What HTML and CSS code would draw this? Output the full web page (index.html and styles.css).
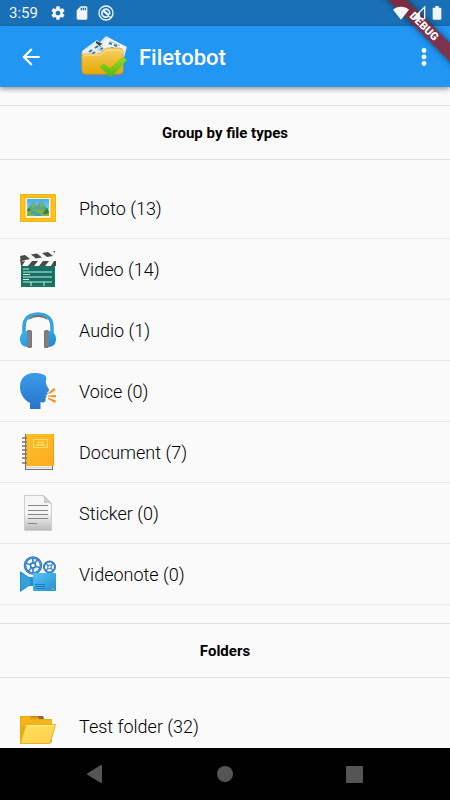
FILE: index.html
```html
<!DOCTYPE html>
<html lang="en">
<head>
    <meta charset="UTF-8">
    <meta name="viewport" content="width=device-width, initial-scale=1.0">
    <title>Filetobot</title>
    <link rel="stylesheet" href="styles.css">
</head>
<body>

    <div class="status-bar">
        <span class="clock">3:59</span>
        <svg class="status-icon" viewBox="0 0 24 24" fill="currentColor"><path d="M19.43 12.98c.04-.32.07-.64.07-.98s-.03-.66-.07-.98l2.11-1.65c.19-.15.24-.42.12-.64l-2-3.46c-.12-.22-.39-.3-.61-.22l-2.49 1c-.52-.4-1.08-.73-1.69-.98l-.38-2.65C14.46 2.18 14.25 2 14 2h-4c-.25 0-.46.18-.49.42l-.38 2.65c-.61.25-1.17.59-1.69.98l-2.49-1c-.23-.09-.49 0-.61.22l-2 3.46c-.13.22-.07.49.12.64l2.11 1.65c-.04.32-.07.65-.07.98s.03.66.07.98l-2.11 1.65c-.19.15-.24.42-.12.64l2 3.46c.12.22.39.3.61.22l2.49-1c.52.4 1.08.73 1.69.98l.38 2.65c.03.24.24.42.49.42h4c.25 0 .46-.18.49-.42l.38-2.65c.61-.25 1.17-.59 1.69-.98l2.49 1c.23.09.49 0 .61-.22l2-3.46c.12-.22.07-.49-.12-.64l-2.11-1.65zM12 15.5c-1.93 0-3.5-1.57-3.5-3.5s1.57-3.5 3.5-3.5 3.5 1.57 3.5 3.5-1.57 3.5-3.5 3.5z"/></svg>
        <svg class="status-icon" viewBox="0 0 24 24" fill="currentColor"><path d="M18 2h-8L4 8v12c0 1.100.9 2 2 2h12c1.100 0 2-.9 2-2V4c0-1.100-.9-2-2-2zm-6 6h-2V4h2v4zm3 0h-2V4h2v4zm3 0h-2V4h2v4z"/></svg>
        <svg class="status-icon" viewBox="0 0 24 24" fill="none" stroke="currentColor"><circle cx="12" cy="12" r="10.500" stroke-width="2"/><path d="M16 16.500A6 6 0 1 1 17.500 14" stroke-width="2.500"/><path d="M8 8.500l8.500 7" stroke-width="3.500"/><path d="M17 17l2.500 2.500" stroke-width="2"/></svg>
        <div class="status-right">
            <svg class="status-icon" viewBox="0 0 24 24" fill="currentColor"><path d="M12 22L0 7C3 4 7.300 2.500 12 2.500S21 4 24 7z"/></svg>
            <svg class="status-icon" viewBox="0 0 24 24"><path d="M3 20.500L20.500 3v17.500z" fill="none" stroke="currentColor" stroke-width="2"/><path d="M2 21.500L13.500 10v11.500z" fill="currentColor"/></svg>
            <svg class="status-icon" viewBox="0 0 24 24" fill="currentColor"><path d="M7 4h2.500V1.500h5V4H17q1.500 0 1.500 1.500v15q0 1.500-1.500 1.500H7q-1.500 0-1.500-1.500v-15Q5.500 4 7 4z"/></svg>
        </div>
    </div>

    <header class="app-bar">
        <button class="icon-button" type="button" aria-label="Back">
            <svg width="26" height="26" viewBox="0 0 24 24" fill="currentColor"><path d="M20 11H7.830l5.590-5.590L12 4l-8 8 8 8 1.410-1.410L7.830 13H20v-2z"/></svg>
        </button>
        <svg class="logo" width="48" height="42" viewBox="0 0 48 42">
            <defs>
                <linearGradient id="logoFolder" x1="0" y1="0" x2="0" y2="1"><stop offset="0" stop-color="#f6cf68"/><stop offset="1" stop-color="#e5a900"/></linearGradient>
                <linearGradient id="logoCheck" x1="0" y1="0" x2="0" y2="1"><stop offset="0" stop-color="#91df25"/><stop offset="1" stop-color="#52b512"/></linearGradient>
            </defs>
            <ellipse cx="23" cy="39" rx="22" ry="2" fill="#5d87a5" opacity=".7"/>
            <path d="M1 17h6v20H2z" fill="#e78a13"/>
            <path d="M2 15L17 4l12 11-4 19H4z" fill="#e6edf1"/>
            <path d="M17 9l9-9 21 11-6 21H17z" fill="#dbe5ea"/>
            <path d="M21 8l7-6 18 9-7 16H22z" fill="#f1f4f6"/>
            <path d="M16 5l7 3-3 1 2 3-6-5z" fill="#34434b"/>
            <path d="M9 16l3-2M15 12l3-2M12 18l3-2M20 14l3-2M29 7l3 1M34 9l3 1M31 12l3 1M37 14l3 1" stroke="#287ca3" stroke-width="2"/>
            <path d="M18 13l8 2M30 5l10 5" stroke="#aab9c0" stroke-width="1"/>
            <path d="M2 21q0-3 3-3h13q2 0 4-2l3-3q1-1 3-1h11q4 0 4 4v18q0 4-4 4H6q-4 0-4-4z" fill="url(#logoFolder)" stroke="#d9a02a" stroke-width=".700"/>
            <path d="M3 21q0-2 2-2h14q2 0 4-2l3-3h13q3 0 3 3" fill="none" stroke="#ffe6a0" stroke-width="1"/>
            <path d="M20 31l4-3 6 5 13-12 4 3-16 17z" fill="url(#logoCheck)" stroke="#65bb18" stroke-width=".500"/>
        </svg>
        <h1>Filetobot</h1>
        <button class="icon-button menu-button" type="button" aria-label="Menu">
            <svg width="26" height="26" viewBox="0 0 24 24" fill="currentColor"><circle cx="12" cy="6" r="2.200"/><circle cx="12" cy="12" r="2.200"/><circle cx="12" cy="18" r="2.200"/></svg>
        </button>
    </header>

    <main>
        <h2>Group by file types</h2>
        <ul class="file-list">
            <li>
                <svg class="file-icon" viewBox="0 0 36 36">
                    <defs><linearGradient id="sky" x1="0" y1="0" x2="0" y2="1"><stop offset="0" stop-color="#3baef5"/><stop offset="1" stop-color="#b8eaf8"/></linearGradient></defs>
                    <path d="M0 4h36v28H0z" fill="#f0b414"/><path d="M1 5h34v26H1z" fill="#ffc416"/><path d="M4.500 7h27v22h-27z" fill="#f9ac22"/><path d="M5.500 8h25v20h-25z" fill="#fff2ce"/>
                    <path d="M7 9h22v17H7z" fill="url(#sky)"/>
                    <path d="M7 20l6-9 4 5 4-6 8 11v5H7z" fill="#5aa586"/><path d="M11 15l2-4 3 4-3 4zM19 13l2-3 3 5-3 3z" fill="#75b37a"/>
                    <path d="M7 21q11-3 22 0v5H7z" fill="#7cb342"/><path d="M12 21q8 0 3 2 8 1 6 3h-6q3-2-5-3z" fill="#2b9ee3"/>
                    <path d="M9 17l-2 4h4zM27 17l-3 6h5zM25 20l-2 4h5z" fill="#388048"/>
                </svg>
                <span>Photo (13)</span>
            </li>
            <li>
                <svg class="file-icon" viewBox="0 0 36 36">
                    <path d="M1 13h34v23H1z" fill="#17795f"/><path d="M2 15h32v19H2z" fill="#166f60"/>
                    <path d="M0 5L35 0v5L1 10z" fill="#f3f3f3"/>
                    <path d="M0 5l5-1 5 4-9 2zM11 3.500l6-1 5 4-6 1zM22 2l6-1 5 4-6 1zM33 .300l2-.3v2z" fill="#4a4a4a"/>
                    <path d="M1 10h35v5H1z" fill="#f5f5f5"/><path d="M0 8l5 2-3 5H1zM12 10h6l-4 5H8zM23 10h6l-4 5h-6zM34 10h2v5h-5z" fill="#4a4a4a"/>
                    <circle cx="3" cy="10" r="1" fill="#999"/>
                    <path d="M3 18h6M3 21h29M3 23.500h7M3 26h29M3 28.500h6M3 31h29M11 31v4M24 31v4" fill="none" stroke="#c9eee4" stroke-width="1"/>
                </svg>
                <span>Video (14)</span>
            </li>
            <li>
                <svg class="file-icon" viewBox="0 0 36 36">
                    <defs><linearGradient id="cup" x1="0" y1="0" x2="1" y2="1"><stop offset="0" stop-color="#32b9f5"/><stop offset="1" stop-color="#1e86da"/></linearGradient></defs>
                    <path d="M4 21V15C4 6.500 9.500 2 18 2s14 4.500 14 13v6" fill="none" stroke="#1f86c4" stroke-width="3.200"/>
                    <path d="M4 21V15C4 6.500 9.500 2 18 2s14 4.500 14 13v6" fill="none" stroke="#2fa9ec" stroke-width="2.400"/>
                    <path d="M8 8c2-4 6-5 10-5s8 1 10 5q-5-3-10-3T8 8z" fill="#747474"/>
                    <path d="M8 19v16C3 35 0 32 0 27s3-8 8-8zM28 19v16c5 0 8-3 8-8s-3-8-8-8z" fill="url(#cup)"/>
                    <path d="M7 19q0-1 2-1h1q2 0 2 2v15q0 1-2 1H9q-2 0-2-2zM24 20q0-2 2-2h1q2 0 2 1v15q0 2-2 2h-1q-2 0-2-1z" fill="#757575"/>
                    <path d="M8 20v14M10 20v14M26 20v14M28 20v14" stroke="#969696" stroke-width=".700"/>
                </svg>
                <span>Audio (1)</span>
            </li>
            <li>
                <svg class="file-icon" viewBox="0 0 36 36">
                    <defs><linearGradient id="head" x1="0" y1="0" x2="0" y2="1"><stop offset="0" stop-color="#3a9bea"/><stop offset="1" stop-color="#2a75cb"/></linearGradient></defs>
                    <path d="M10 36v-6C4 27 0 21 0 14 0 5 6 0 14 0c6 0 11 1 12 4 1 2-.5 3 0 6 0 3 3 5 3 7s-2 2-2 2l1 2-2 1 .5 2-1 1v2c0 2-2 3-5 2v7z" fill="url(#head)"/>
                    <path d="M28 20l6-5 1.500 2-6 4zM28 22.500l8-.5v2.500l-8-1zM28 24.500l8 3-1 2.500-7-4z" fill="#f59320"/>
                </svg>
                <span>Voice (0)</span>
            </li>
            <li>
                <svg class="file-icon" viewBox="0 0 36 36">
                    <defs><linearGradient id="book" x1="0" y1="0" x2="1" y2="1"><stop offset="0" stop-color="#fbc02d"/><stop offset="1" stop-color="#ffab1b"/></linearGradient></defs>
                    <path d="M5 0h28v36H5z" fill="#757575"/><path d="M6 31h26v4H6z" fill="#eee"/><path d="M6 33h26v1H6z" fill="#dcdcdc"/>
                    <path d="M5 0h29v32H5z" fill="url(#book)"/><path d="M5 0h1v32H5z" fill="#8b7350"/><path d="M33 0h1v32h-1z" fill="#f09a18"/>
                    <path d="M13.500 5.500h14v8h-14z" fill="#ffb727" stroke="#ffdd69"/><path d="M17 8.500h7M16 11h9" stroke="#ffdd69" stroke-width="1.500"/>
                    <path d="M2 4h5M2 8h5M2 12h5M2 16h5M2 20h5M2 24h5M2 29h5" stroke="#757575" stroke-width="1.500"/>
                </svg>
                <span>Document (7)</span>
            </li>
            <li>
                <svg class="file-icon" viewBox="0 0 36 36">
                    <defs><linearGradient id="paper" x1="0" y1="0" x2="0" y2="1"><stop offset=".5" stop-color="#f6f6f6"/><stop offset="1" stop-color="#b9b9b9"/></linearGradient></defs>
                    <path d="M4.500.5h19l8 8v27h-27z" fill="url(#paper)" stroke="#cecece"/><path d="M23.500.5l8 8q-5-2-7-1 1-3-1-7z" fill="#d0d0d0" stroke="#b9b9b9" stroke-width=".700"/>
                    <path d="M8 10.500h20M8 15.500h20M8 19.500h20M8 23.500h20M8 28.500h9" stroke="#858585"/>
                </svg>
                <span>Sticker (0)</span>
            </li>
            <li>
                <svg class="file-icon" viewBox="0 0 36 36">
                    <defs><linearGradient id="camera" x1="0" y1="0" x2="1" y2="1"><stop offset="0" stop-color="#5cc3f2"/><stop offset="1" stop-color="#1f90d2"/></linearGradient></defs>
                    <path d="M13 2v15M5.500 7l15 5M8 16l10-13" stroke="#3f8bd6" stroke-width="1.800"/>
                    <circle cx="13" cy="9.500" r="8" fill="none" stroke="#2f74c4" stroke-width="2.600"/>
                    <circle cx="13" cy="9.500" r="8" fill="none" stroke="#4f9ce4" stroke-width="1"/>
                    <circle cx="13" cy="9.500" r="2.500" fill="#fff" stroke="#2979c5" stroke-width="1.500"/>
                    <path d="M25.500 7l8 8M33.500 7l-8 8" stroke="#3f8bd6" stroke-width="1.500"/>
                    <circle cx="29.500" cy="11" r="5.500" fill="none" stroke="#3180c9" stroke-width="2"/>
                    <circle cx="29.500" cy="11" r="1.800" fill="#fff" stroke="#2979c5"/>
                    <path d="M0 15l9 6h5v9H9l-9 6z" fill="#2190d0"/><path d="M1 17l9 5v7L1 34z" fill="#35a0dc"/>
                    <rect x="13" y="17" width="23" height="18" rx="1" fill="url(#camera)"/><path d="M15 28.500h10M15 30.500h10M15 32.500h10" stroke="#1679b5" stroke-width=".800"/>
                    <circle cx="33" cy="30" r="1" fill="#e75e72"/><circle cx="33" cy="33" r="1" fill="#79cf68"/>
                </svg>
                <span>Videonote (0)</span>
            </li>
        </ul>

        <h2>Folders</h2>
        <ul class="file-list">
            <li>
                <svg class="file-icon" viewBox="0 -4 36 36">
                    <defs><linearGradient id="folder" x1="0" y1="0" x2="1" y2="1"><stop offset="0" stop-color="#ffe45c"/><stop offset="1" stop-color="#ffcb50"/></linearGradient></defs>
                    <path d="M0 4h23l1 3h8v23l-3 2H0z" fill="#e7ac13"/><path d="M1 5h9v3h21v5H1z" fill="#f4b41c"/>
                    <path d="M10 4h10l1 2H11z" fill="#e58019"/><path d="M18 4h5l1 3h-5z" fill="#94653f"/>
                    <path d="M6 12.500h29.500L30 31.500H.5z" fill="url(#folder)" stroke="#e7b323"/>
                    <path d="M7 13.500h28" stroke="#fff27c"/>
                </svg>
                <span>Test folder (32)</span>
            </li>
        </ul>
    </main>

    <nav class="nav-bar">
        <button type="button" aria-label="System back"><svg width="18" height="18" viewBox="0 0 18 18"><path d="M14 1v16L1 9z" stroke="currentColor" stroke-width="2" stroke-linejoin="round" fill="currentColor"/></svg></button>
        <button type="button" aria-label="Home"><svg width="18" height="18" viewBox="0 0 18 18"><circle cx="9" cy="9" r="8" fill="currentColor"/></svg></button>
        <button type="button" aria-label="Recent apps"><svg width="18" height="18" viewBox="0 0 18 18"><rect x="1" y="1" width="17" height="17" rx="1" fill="currentColor"/></svg></button>
    </nav>

    <div class="debug-banner">DEBUG</div>

</body>
</html>
```
FILE: styles.css
```css
:root {
    --color-primary: #2196f3;
    --color-primary-dark: #1a70b6;
    --color-background: #fafafa;
    --color-line: #dddddd;
    --color-row-line: #e8e8e8;
    --color-nav: #555555;
}

* {
    margin: 0;
    padding: 0;
    box-sizing: border-box;
}

body {
    position: relative;
    display: flex;
    flex-direction: column;
    height: 100vh;
    overflow: hidden;
    font-family: Roboto, "Liberation Sans", sans-serif;
    color: #000000;
    background-color: var(--color-background);
}

svg {
    display: block;
    flex: none;
}

button {
    border: none;
    background: none;
    color: inherit;
    cursor: pointer;
}

/* Status bar */
.status-bar {
    display: flex;
    align-items: center;
    flex: none;
    gap: 8px;
    height: 26px;
    padding: 0 5px 0 9px;
    background-color: var(--color-primary-dark);
    color: #f1f5f9;
}

.clock {
    margin-right: 4px;
    font-size: 15px;
    line-height: 28px;
}

.status-icon {
    width: 16px;
    height: 16px;
}

/* Stays above the debug banner */
.status-right {
    position: relative;
    z-index: 2;
    display: flex;
    gap: 2px;
    margin-left: auto;
}

/* App bar */
.app-bar {
    position: relative;
    display: flex;
    align-items: center;
    flex: none;
    height: 61px;
    padding: 1px 8px 0 13px;
    background-color: var(--color-primary);
    color: #ffffff;
    box-shadow: 0 2px 5px rgba(0, 0, 0, 0.4);
}

.icon-button {
    display: flex;
    justify-content: center;
    width: 36px;
}

.logo {
    margin-left: 31px;
}

h1 {
    margin-left: 11px;
    font-size: 22px;
    font-weight: 500;
}

.menu-button {
    margin-left: auto;
}

/* File lists */
main {
    flex: 1;
    min-height: 0;
    padding-top: 18px;
    overflow: hidden;
}

h2 {
    height: 55px;
    border-top: 1px solid var(--color-line);
    border-bottom: 1px solid var(--color-line);
    font-size: 15px;
    font-weight: 700;
    line-height: 55px;
    text-align: center;
}

.file-list {
    padding: 18px 0;
    list-style: none;
}

.file-list li {
    display: flex;
    align-items: center;
    gap: 23px;
    height: 61px;
    padding: 0 20px;
    border-bottom: 1px solid var(--color-row-line);
    font-size: 18px;
    font-weight: 300;
}

.file-icon {
    width: 36px;
    height: 36px;
}

/* System navigation */
.nav-bar {
    display: flex;
    align-items: center;
    justify-content: center;
    flex: none;
    gap: 111px;
    height: 52px;
    background-color: #000000;
    color: var(--color-nav);
}

.debug-banner {
    position: absolute;
    top: 20px;
    right: -34px;
    z-index: 1;
    width: 120px;
    height: 13px;
    background-color: rgba(148, 28, 34, 0.8);
    box-shadow: 0 0 6px rgba(0, 0, 0, 0.5);
    color: #ffffff;
    font-size: 11px;
    font-weight: 900;
    line-height: 13px;
    text-align: center;
    transform: rotate(45deg);
}
```
